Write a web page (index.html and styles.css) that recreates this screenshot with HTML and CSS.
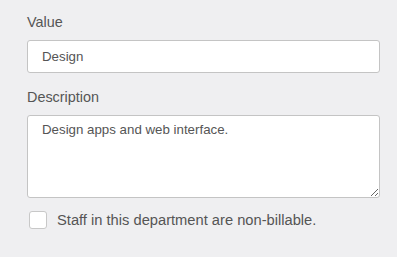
FILE: index.html
```html
<!DOCTYPE html>
<html lang="en">
<head>
  <meta charset="UTF-8">
  <meta name="viewport" content="width=device-width, initial-scale=1.0">
  <title>Department</title>
  <link rel="stylesheet" href="styles.css">
</head>
<body>

  <form class="dept-form">
    <div class="field">
      <label class="field-label" for="value">Value</label>
      <input type="text" id="value" class="field-input" value="Design">
    </div>
    <div class="field">
      <label class="field-label" for="description">Description</label>
      <textarea id="description" class="field-textarea">Design apps and web interface.</textarea>
    </div>
    <label class="check-row">
      <input type="checkbox" class="check-input">
      <span class="check-box"></span>
      <span class="check-text">Staff in this department are non-billable.</span>
    </label>
  </form>

</body>
</html>
```

FILE: styles.css
```css
body {
  font-family: "Liberation Sans", Arial, sans-serif;
  margin: 0;
  padding: 0;
  background-color: #efeff1;
  color: #555;
  font-size: 14px;
}
.dept-form {
  padding: 12px 17px 0 27px;
}
.field {
  margin-bottom: 14px;
}
.field-label {
  display: block;
  font-size: 14.4px;
  line-height: 20px;
  margin-bottom: 8px;
  color: #555;
}
.field-input,
.field-textarea {
  display: block;
  box-sizing: border-box;
  width: 100%;
  font-family: inherit;
  font-size: 13.3px;
  color: #555;
  background-color: white;
  border: 1px solid #c4c4c4;
  border-radius: 3px;
  outline: none;
  margin: 0;
}
.field-input {
  height: 33px;
  padding: 0 14px;
}
.field-textarea {
  height: 83px;
  padding: 6px 14px;
  line-height: 16px;
  resize: vertical;
}
.check-row {
  display: flex;
  align-items: center;
  margin-top: -2px;
  padding-left: 2px;
}
.check-input {
  display: none;
}
.check-box {
  width: 16px;
  height: 16px;
  background-color: white;
  border: 1px solid #c8c8c8;
  border-radius: 3px;
  margin-right: 10px;
}
.check-text {
  font-size: 14.7px;
  line-height: 20px;
  color: #555;
}
```
